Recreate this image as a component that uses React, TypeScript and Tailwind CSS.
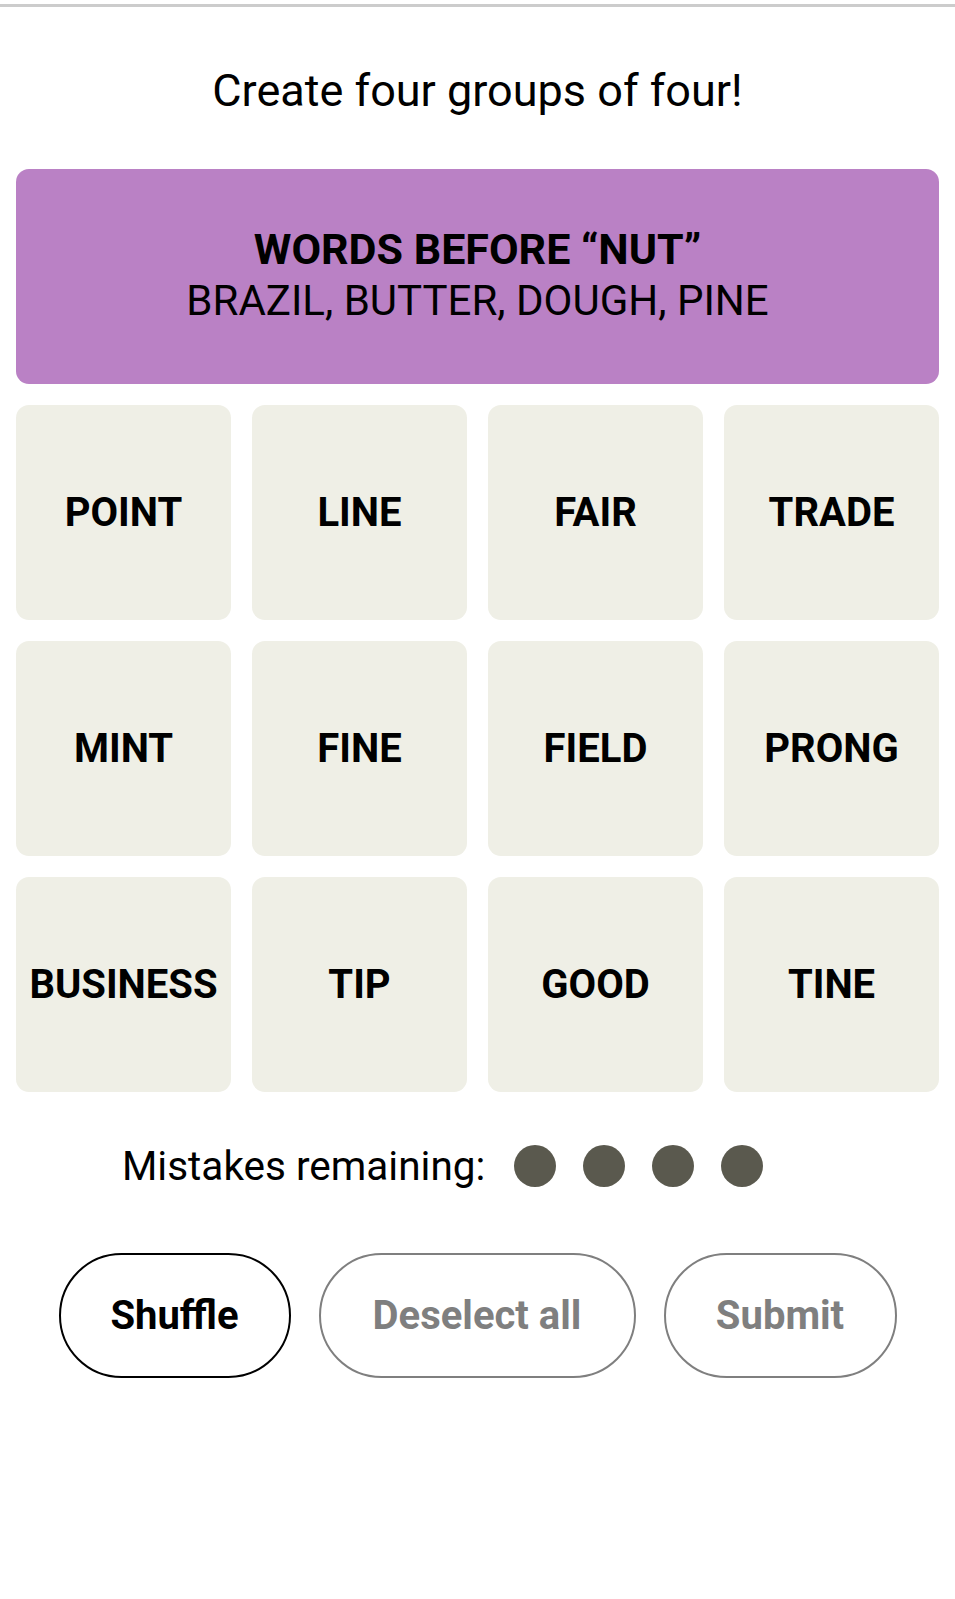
import React from "react";

const rows = [
  ["POINT", "LINE", "FAIR", "TRADE"],
  ["MINT", "FINE", "FIELD", "PRONG"],
  ["BUSINESS", "TIP", "GOOD", "TINE"],
];

export default function App() {
  return (
    <div
      className="w-full min-h-[1599px] bg-white text-black"
      style={{ fontFamily: "Roboto, 'Liberation Sans', sans-serif" }}
    >
      <div className="h-[3px] mt-[4px] bg-[#cccccc]" />
      <h1 className="mt-[58px] text-center text-[45px] leading-[52px] font-normal">
        Create four groups of four!
      </h1>
      <div className="mt-[52px] px-4 grid grid-cols-4 gap-[21px]">
        <div className="col-span-4 h-[215px] pb-[4px] rounded-[13px] bg-[#ba81c5] flex flex-col items-center justify-center">
          <div className="text-[43px] leading-[51px] font-bold">WORDS BEFORE “NUT”</div>
          <div className="text-[42px] leading-[51px] font-normal">BRAZIL, BUTTER, DOUGH, PINE</div>
        </div>
        {rows.flat().map((w) => (
          <div
            key={w}
            className="h-[215px] rounded-[13px] bg-[#efefe6] flex items-center justify-center text-[40px] font-bold"
          >
            {w}
          </div>
        ))}
      </div>
      <div className="mt-[52px] h-[44px] flex items-center pl-[122px]">
        <span className="text-[40.5px] leading-[44px]">Mistakes remaining:</span>
        <div className="ml-[29px] flex gap-[27px]">
          {[0, 1, 2, 3].map((i) => (
            <span key={i} className="block w-[42px] h-[42px] rounded-full bg-[#5a594e]" />
          ))}
        </div>
      </div>
      <div className="mt-[65px] flex justify-center gap-[28px]">
        <button className="w-[232px] h-[125px] rounded-full border-2 border-black text-[40px] font-bold text-black bg-white">
          Shuffle
        </button>
        <button className="w-[317px] h-[125px] rounded-full border-2 border-[#7f7f7f] text-[40px] font-bold text-[#7f7f7f] bg-white">
          Deselect all
        </button>
        <button className="w-[233px] h-[125px] rounded-full border-2 border-[#7f7f7f] text-[40px] font-bold text-[#7f7f7f] bg-white">
          Submit
        </button>
      </div>
    </div>
  );
}
